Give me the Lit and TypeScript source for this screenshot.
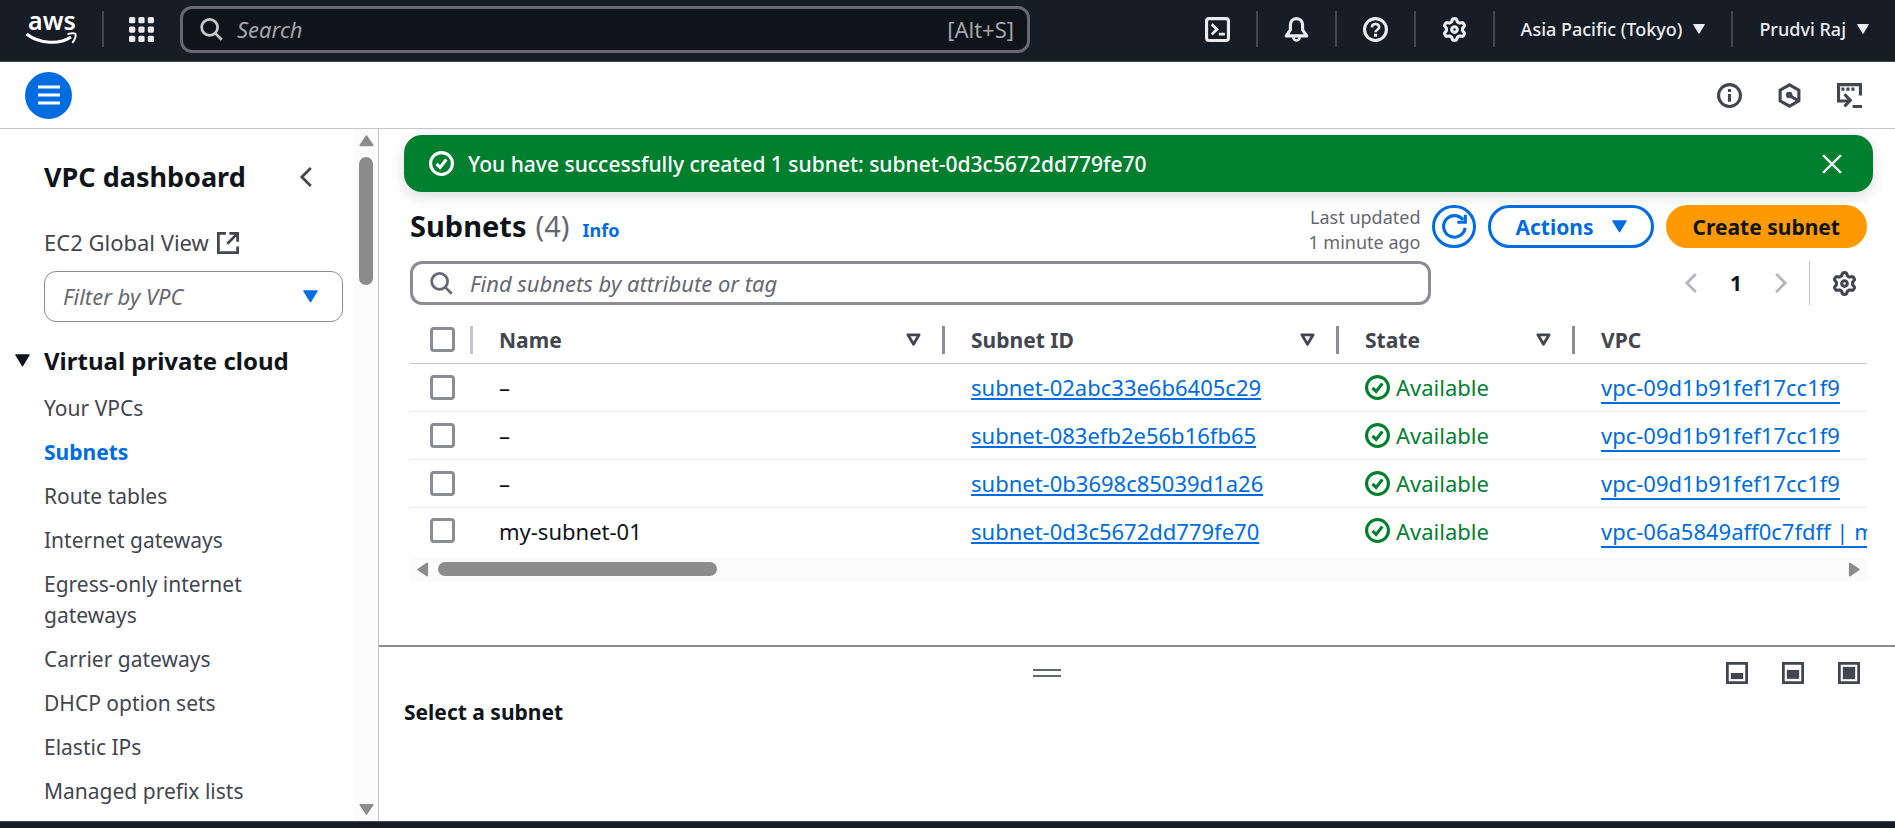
import { LitElement, html, css, svg, nothing } from "lit";
import { customElement } from "lit/decorators.js";

// Outline of a six-toothed gear on a 16-unit grid.
const gearPath = (() => {
  const points: string[] = [];
  for (let i = 0; i < 120; i++) {
    const a = (i / 120) * Math.PI * 2;
    const r = 6.05 + 0.95 * Math.tanh(1.8 * Math.cos(6 * (a - Math.PI / 2)));
    points.push(`${(8 + r * Math.cos(a)).toFixed(2)} ${(8 + r * Math.sin(a)).toFixed(2)}`);
  }
  return `M${points.join("L")}Z`;
})();

const shapes = {
  apps: svg`<g fill="currentColor" stroke="none">${[0, 6, 12].map((y) =>
    [0, 6, 12].map((x) => svg`<rect x=${x} y=${y} width="4" height="4" rx="1"/>`)
  )}</g>`,
  search: svg`<circle cx="7" cy="6.800" r="5.800"/><path d="m11 11 4.800 4.800"/>`,
  shell: svg`<rect x="1" y="1" width="14" height="14" rx="1.6"/><path d="m4.3 4.6 3.3 3.3-3.3 3.3M8.8 11h3.9" stroke-width="1.8"/>`,
  bell: svg`<path d="M8 1C5.400 1 4.100 2.900 4.100 5.300V8.300L1.400 12.100H14.600L11.900 8.300V5.300C11.900 2.900 10.600 1 8 1Z" stroke-linejoin="round"/><path d="M6 12.500c0 1.700.7 2.500 2 2.500s2-.8 2-2.500" stroke-width="1.600"/>`,
  help: svg`<circle cx="8" cy="8" r="7"/><path d="M5.700 6.700C5.700 5.200 6.600 4.500 8 4.500s2.300.8 2.300 2c0 1.600-2.300 1.700-2.300 3.300" stroke-width="1.700"/><path d="M8 10.700v1.900"/>`,
  gear: svg`<path d=${gearPath} stroke-linejoin="round"/><circle cx="8" cy="8" r="1.800"/>`,
  info: svg`<circle cx="8" cy="8" r="7"/><path d="M8 3.800v2M8 7v5"/>`,
  hexagon: svg`<path d="M8 1.200 14 4.600v6.800L8 14.800 2 11.400V4.600Z"/><circle cx="7.800" cy="7.700" r="2.100" fill="currentColor" stroke="none"/><path d="m8 8 5 3"/>`,
  session: svg`<path d="M15 8V1H1v10.500h6.500"/><path d="M2.800 3.900h2M6 3.900h2M9.200 3.900h2"/><path d="m4.800 7.200 3.700 3.900-3.700 3.900M10 15h6"/>`,
  left: svg`<path d="M11.500 1.500 5 8l6.500 6.500"/>`,
  right: svg`<path d="M4.500 1.500 11 8l-6.500 6.500"/>`,
  external: svg`<path d="M6.500 1H1v14h14v-4.500M9 1h6v6M15 1 7.500 8.500"/>`,
  check: svg`<circle cx="8" cy="8" r="7"/><path d="m4.800 8.200 2.300 2.300 4-5"/>`,
  close: svg`<path d="M1.500 1.500 14.500 14.500M14.500 1.500 1.500 14.500" stroke-width="1.800"/>`,
  refresh: svg`<path d="M14.800 8.800A6.900 6.900 0 1 1 13.500 3.800"/><path d="M14.900.500v4.800H9.800"/>`,
  menu: svg`<path d="M0 2.200h16M0 8h16M0 13.800h16" stroke-width="2.200"/>`,
  down: svg`<path d="M1 2h14L8 13.500Z" fill="currentColor" stroke-linejoin="round" stroke-width="1.500"/>`,
  sort: svg`<path d="M2 3h12L8 13Z" stroke-linejoin="round" stroke-width="3"/>`,
  panelLow: svg`<rect x="1" y="1" width="14" height="14"/><path d="M3.500 10.200h9" stroke-width="4.500"/>`,
  panelMid: svg`<rect x="1" y="1" width="14" height="14"/><path d="M3.500 9h9" stroke-width="6.500"/>`,
  panelFull: svg`<rect x="1" y="1" width="14" height="14"/><path d="M3.500 8h9" stroke-width="9"/>`,
  thumbUp: svg`<path d="M8 3.500 14.500 13h-13Z" fill="currentColor" stroke-linejoin="round"/>`,
  thumbDown: svg`<path d="M8 12.500 14.500 3h-13Z" fill="currentColor" stroke-linejoin="round"/>`,
  thumbLeft: svg`<path d="M3.500 8 13 1.500v13Z" fill="currentColor" stroke-linejoin="round"/>`,
  thumbRight: svg`<path d="M12.500 8 3 1.500v13Z" fill="currentColor" stroke-linejoin="round"/>`,
};

type ShapeName = keyof typeof shapes;

const icon = (name: ShapeName, size: "xs" | "s" | "m" | "l" = "l") =>
  html`<svg class="icon ${size}" viewBox="0 0 16 16" aria-hidden="true">${shapes[name]}</svg>`;

const base = css`
  * { box-sizing: border-box; }
  button, input, select { font: inherit; color: inherit; margin: 0; }
  button { border: 0; padding: 0; background: none; cursor: pointer; display: flex; align-items: center; justify-content: center; }
  a { color: inherit; text-decoration: none; }
  h1, h2, h3, p, ul { margin: 0; padding: 0; list-style: none; }
  .icon { display: block; flex: none; fill: none; stroke: currentColor; stroke-width: 2; overflow: visible; }
  .xs { width: 12px; height: 12px; }
  .s { width: 15px; height: 15px; }
  .m { width: 22px; height: 22px; }
  .l { width: 25px; height: 25px; }
`;

@customElement("console-header")
class ConsoleHeader extends LitElement {
  static styles = [
    base,
    css`
      :host { display: block; color: #ebebf0; }
      .bar { display: flex; align-items: center; height: 62px; padding: 0 26px 3px 25px; background: #161d26; border-bottom: 1px solid #424650; font-size: 18px; font-weight: 500; }
      .logo { display: block; width: 52px; height: 34px; color: #fff; overflow: visible; }
      .word { font: 600 25px/30px "Noto Sans", sans-serif; fill: currentColor; }
      .rule { width: 2px; height: 36px; background: #424650; }
      .apps { margin: 0 25px; }
      .search { display: flex; align-items: center; flex: 0 1 850px; height: 47px; padding: 0 13px 0 17px; border: 3px solid #656871; border-radius: 12px; background: #0f141a; color: #c6c6cd; font-size: 22px; font-weight: 400; margin: 0 25px 0 26px; }
      .search input { flex: 1; min-width: 0; border: 0; outline: 0; padding: 0 0 0 15px; background: none; font-style: italic; }
      .search input::placeholder { color: #a4a4ad; opacity: 1; }
      .key { color: #a4a4ad; }
      .tools { display: flex; align-items: center; gap: 26px; margin-left: auto; }
      .menu { gap: 11px; white-space: nowrap; }
      .sub { display: flex; align-items: center; height: 67px; padding: 0 33px 0 25px; border-bottom: 1px solid #c6c6cd; background: #fff; color: #424650; }
      .round { width: 47px; height: 47px; border-radius: 50%; background: #006ce0; color: #fff; }
      .extras { display: flex; gap: 35px; margin-left: auto; }
    `,
  ];

  render() {
    return html`
      <header class="bar">
        <a href="#" aria-label="AWS home">
          <svg class="logo" viewBox="0 0 52 34">
            <text class="word" x="3" y="18">aws</text>
            <path d="M1.500 22C15 32.500 35 32.500 46 25" fill="none" stroke="currentColor" stroke-width="3" />
            <path d="M42.500 22.500C45 21 50.200 20.800 50.500 22C51 24.500 49.300 28.500 47.300 30.800" fill="none" stroke="currentColor" stroke-width="2" />
          </svg>
        </a>
        <span class="rule apps"></span>
        <button aria-label="Services">${icon("apps")}</button>
        <label class="search">
          ${icon("search", "m")}
          <input type="text" placeholder="Search" aria-label="Search" />
          <span class="key">[Alt+S]</span>
        </label>
        <nav class="tools">
          <button aria-label="CloudShell">${icon("shell")}</button>
          <span class="rule"></span>
          <button aria-label="Notifications">${icon("bell")}</button>
          <span class="rule"></span>
          <button aria-label="Help">${icon("help")}</button>
          <span class="rule"></span>
          <button aria-label="Settings">${icon("gear")}</button>
          <span class="rule"></span>
          <button class="menu">Asia Pacific (Tokyo) ${icon("down", "xs")}</button>
          <span class="rule"></span>
          <button class="menu">Prudvi Raj ${icon("down", "xs")}</button>
        </nav>
      </header>
      <div class="sub">
        <button class="round" aria-label="Navigation">${icon("menu", "m")}</button>
        <div class="extras">
          <button aria-label="Info">${icon("info")}</button>
          <button aria-label="Diagnostics">${icon("hexagon")}</button>
          <button aria-label="Session">${icon("session")}</button>
        </div>
      </div>
    `;
  }
}

@customElement("vpc-sidebar")
class VpcSidebar extends LitElement {
  static styles = [
    base,
    css`
      :host { display: flex; overflow: hidden; border-right: 1px solid #c6c6cd; color: #424650; font-size: 21px; line-height: 31px; background: #fff; }
      .nav { flex: 1; min-width: 0; padding: 32px 11px 0 44px; overflow: hidden; }
      .head { display: flex; align-items: center; justify-content: space-between; padding-right: 26px; margin-bottom: 35px; color: #0f141a; }
      .head h2 { font-size: 27px; line-height: 31px; }
      .head button { color: #424650; }
      .ext { display: flex; align-items: center; gap: 8px; margin-bottom: 13px; font-size: 22px; }
      .picker { display: grid; align-items: center; margin-bottom: 23px; }
      .picker > * { grid-area: 1 / 1; }
      .picker select { width: 100%; height: 51px; padding: 0 18px; border: 1px solid #8c8c94; border-radius: 12px; appearance: none; background: #fff; color: #656871; font-size: 22px; font-style: italic; }
      .picker .caret { justify-self: end; margin-right: 25px; color: #006ce0; pointer-events: none; }
      .group { display: flex; align-items: center; gap: 14px; margin: 0 0 17px -29px; color: #0f141a; }
      .group h3 { font-size: 24px; line-height: 31px; white-space: nowrap; }
      .items li { margin-bottom: 13px; padding-right: 60px; }
      .current { color: #006ce0; font-weight: 700; }
      .track { display: flex; flex-direction: column; align-items: center; width: 24px; padding: 4px 0; background: #fbfbfb; color: #8c8c8c; }
      .thumb { width: 14px; height: 128px; margin: 9px 0 auto; border-radius: 7px; background: #8c8c8c; }
    `,
  ];

  private links = [
    "Your VPCs", "Subnets", "Route tables", "Internet gateways", "Egress-only internet gateways",
    "Carrier gateways", "DHCP option sets", "Elastic IPs", "Managed prefix lists",
  ];

  render() {
    return html`
      <nav class="nav">
        <div class="head">
          <h2>VPC dashboard</h2>
          <button aria-label="Collapse">${icon("left", "m")}</button>
        </div>
        <a class="ext" href="#">EC2 Global View ${icon("external", "m")}</a>
        <div class="picker">
          <select aria-label="Filter by VPC"><option>Filter by VPC</option></select>
          <span class="caret">${icon("down", "s")}</span>
        </div>
        <div class="group">${icon("down", "s")}<h3>Virtual private cloud</h3></div>
        <ul class="items">
          ${this.links.map((l) => html`<li><a href="#" class=${l === "Subnets" ? "current" : nothing}>${l}</a></li>`)}
        </ul>
      </nav>
      <div class="track" aria-hidden="true">
        ${icon("thumbUp", "s")}
        <span class="thumb"></span>
        ${icon("thumbDown", "s")}
      </div>
    `;
  }
}

@customElement("subnet-table")
class SubnetTable extends LitElement {
  static styles = [
    base,
    css`
      :host { display: block; font-size: 22px; line-height: 30px; color: #0f141a; }
      .clip { overflow: hidden; padding-bottom: 3px; }
      table { width: 1900px; table-layout: fixed; border-collapse: collapse; }
      th, td { padding: 0 26px; text-align: left; white-space: nowrap; border-bottom: 1px solid #ebebf0; height: 48px; }
      th { height: 46px; color: #424650; border-color: #c6c6cd; font-size: 21px; }
      tbody tr:last-child td { height: 47px; border-color: transparent; }
      .pick { width: 63px; padding: 0 0 0 20px; }
      .name { width: 472px; }
      .id { width: 394px; }
      .state { width: 236px; }
      .cell, .ok { display: flex; align-items: center; }
      .label { flex: 1; }
      .grip { width: 3px; height: 28px; margin: 0 -26px 0 21px; background: #8c8c94; }
      .pick .grip { margin: 0 0 0 auto; background: #c6c6cd; }
      input { display: block; width: 25px; height: 25px; border: 3px solid #8c8c94; border-radius: 4px; appearance: none; background: #fff; }
      .link { color: #006ce0; text-decoration: underline; text-decoration-thickness: 2px; text-underline-offset: 2px; }
      .vpc { color: #006ce0; border-bottom: 2px solid #006ce0; }
      .ok { gap: 6px; color: #00802f; }
      .track { display: flex; align-items: center; height: 23px; padding: 0 5px; background: #fbfbfb; color: #8c8c8c; }
      .thumb { width: 279px; height: 14px; margin: 0 auto 0 8px; border-radius: 7px; background: #8c8c8c; }
    `,
  ];

  private rows = [
    { name: "–", id: "subnet-02abc33e6b6405c29", vpc: "vpc-09d1b91fef17cc1f9" },
    { name: "–", id: "subnet-083efb2e56b16fb65", vpc: "vpc-09d1b91fef17cc1f9" },
    { name: "–", id: "subnet-0b3698c85039d1a26", vpc: "vpc-09d1b91fef17cc1f9" },
    { name: "my-subnet-01", id: "subnet-0d3c5672dd779fe70", vpc: "vpc-06a5849aff0c7fdff | my-vpc-01" },
  ];

  private heading(cls: string, label: string) {
    return html`<th class=${cls} scope="col">
      <div class="cell"><span class="label">${label}</span>${icon("sort", "s")}<span class="grip"></span></div>
    </th>`;
  }

  render() {
    return html`
      <div class="clip">
        <table>
          <thead>
            <tr>
              <th class="pick" scope="col">
                <div class="cell"><input type="checkbox" aria-label="Select all" /><span class="grip"></span></div>
              </th>
              ${this.heading("name", "Name")} ${this.heading("id", "Subnet ID")} ${this.heading("state", "State")}
              <th scope="col">VPC</th>
            </tr>
          </thead>
          <tbody>
            ${this.rows.map(
              (r) => html`<tr>
                <td class="pick"><input type="checkbox" aria-label="Select ${r.id}" /></td>
                <td>${r.name}</td>
                <td><a class="link" href="#">${r.id}</a></td>
                <td><span class="ok">${icon("check")}Available</span></td>
                <td><a class="vpc" href="#">${r.vpc}</a></td>
              </tr>`
            )}
          </tbody>
        </table>
      </div>
      <div class="track" aria-hidden="true">
        ${icon("thumbLeft", "s")}<span class="thumb"></span>${icon("thumbRight", "s")}
      </div>
    `;
  }
}

@customElement("app-root")
class AppRoot extends LitElement {
  static styles = [
    base,
    css`
      :host { display: flex; flex-direction: column; height: 100vh; overflow: hidden; background: #fff; color: #0f141a; font-family: "Noto Sans", "Open Sans", sans-serif; font-size: 21px; line-height: 30px; }
      .body { display: flex; flex: 1; min-height: 0; }
      vpc-sidebar { flex: 0 0 379px; }
      main { display: flex; flex-direction: column; flex: 1; min-width: 0; }
      .content { flex: 1; min-height: 0; padding: 6px 22px 0 25px; }
      .flash { display: flex; align-items: center; gap: 14px; height: 57px; padding: 0 30px 0 25px; border-radius: 18px; background: #00802f; color: #fff; font-weight: 500; box-shadow: 0 5px 14px rgba(15, 20, 26, 0.14); }
      .flash button { margin-left: auto; color: #ebebf0; }
      .inner { padding: 0 6px; }
      .titlebar { display: flex; align-items: center; gap: 12px; height: 69px; }
      .title { display: flex; align-items: baseline; gap: 9px; margin-right: auto; }
      .title h1 { font-size: 29px; line-height: 36px; }
      .count { font-size: 29px; color: #656871; }
      .info { margin-left: 4px; font-size: 18px; font-weight: 700; color: #006ce0; }
      .updated { padding-top: 6px; font-size: 18px; line-height: 25px; text-align: right; color: #656871; }
      .btn { height: 43px; border-radius: 22px; font-weight: 700; border: 3px solid #006ce0; color: #006ce0; padding: 0 24px; gap: 18px; }
      .circle { width: 44px; padding: 0; }
      .primary { border-color: #ff9900; background: #ff9900; color: #0f141a; }
      .filters { display: flex; align-items: center; height: 44px; margin-bottom: 12px; }
      .find { display: flex; align-items: center; flex: 0 1 1021px; height: 44px; padding: 0 17px; border: 3px solid #8c8c94; border-radius: 12px; color: #656871; font-size: 22px; }
      .find input { flex: 1; min-width: 0; border: 0; outline: 0; background: none; padding: 0 0 0 18px; font-style: italic; }
      .find input::placeholder { color: #656871; opacity: 1; }
      .pager { display: flex; align-items: center; gap: 28px; margin-left: auto; padding-right: 17px; color: #b4b4bb; }
      .pager b { color: #0f141a; }
      .prefs { height: 44px; padding: 0 10px 0 22px; border-left: 1px solid #c6c6cd; color: #424650; }
      .panel { height: 176px; padding: 15px 35px 0 25px; border-top: 2px solid #8c8c94; }
      .grab { display: flex; align-items: center; gap: 36px; height: 22px; margin-bottom: 13px; color: #424650; }
      .handle { width: 28px; height: 8px; margin: 0 auto; border: solid #656871; border-width: 2px 0; cursor: row-resize; }
      .sizes { display: flex; gap: 34px; }
      .panel h2 { font-size: 21px; line-height: 30px; }
      .foot { height: 7px; background: #161d26; border-top: 1px solid #424650; }
    `,
  ];

  render() {
    return html`
      <console-header></console-header>
      <div class="body">
        <vpc-sidebar></vpc-sidebar>
        <main>
          <section class="content">
            <div class="flash" role="status">
              ${icon("check")}<span>You have successfully created 1 subnet: subnet-0d3c5672dd779fe70</span>
              <button aria-label="Dismiss">${icon("close", "m")}</button>
            </div>
            <div class="inner">
              <div class="titlebar">
                <div class="title">
                  <h1>Subnets</h1><span class="count">(4)</span><a class="info" href="#">Info</a>
                </div>
                <p class="updated">Last updated<br />1 minute ago</p>
                <button class="btn circle" aria-label="Refresh">${icon("refresh")}</button>
                <button class="btn">Actions ${icon("down", "s")}</button>
                <button class="btn primary">Create subnet</button>
              </div>
              <div class="filters">
                <label class="find">
                  ${icon("search", "m")}
                  <input type="text" placeholder="Find subnets by attribute or tag" aria-label="Find subnets" />
                </label>
                <div class="pager">
                  <button aria-label="Previous page">${icon("left", "m")}</button>
                  <b>1</b>
                  <button aria-label="Next page">${icon("right", "m")}</button>
                </div>
                <button class="prefs" aria-label="Preferences">${icon("gear")}</button>
              </div>
              <subnet-table></subnet-table>
            </div>
          </section>
          <section class="panel">
            <div class="grab">
              <span class="handle"></span>
              <div class="sizes">
                <button aria-label="Small panel">${icon("panelLow", "m")}</button>
                <button aria-label="Medium panel">${icon("panelMid", "m")}</button>
                <button aria-label="Full panel">${icon("panelFull", "m")}</button>
              </div>
            </div>
            <h2>Select a subnet</h2>
          </section>
        </main>
      </div>
      <footer class="foot"></footer>
    `;
  }
}
